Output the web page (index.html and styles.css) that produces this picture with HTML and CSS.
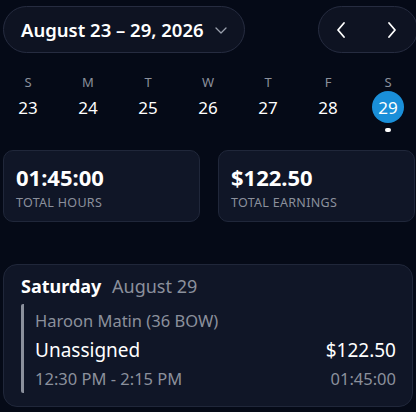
FILE: index.html
```html
<!DOCTYPE html>
<html lang="en">
<head>
  <meta charset="UTF-8">
  <meta name="viewport" content="width=device-width, initial-scale=1.0">
  <title>Timesheet</title>
  <link rel="stylesheet" href="styles.css">
</head>
<body>
  <div class="topbar">
    <button class="range">
      <span>August 23 – 29, 2026</span>
      <svg width="14" height="14" viewBox="0 0 14 14"><path d="M2 5l5 5 5-5" fill="none" stroke="#9aa0ad" stroke-width="1.3" stroke-linecap="round" stroke-linejoin="round"/></svg>
    </button>
    <div class="nav">
      <button class="nav-btn" aria-label="Previous week">
        <svg width="12" height="18" viewBox="0 0 12 18"><path d="M9 2L3 9l6 7" fill="none" stroke="#fff" stroke-width="1.8" stroke-linecap="round" stroke-linejoin="round"/></svg>
      </button>
      <button class="nav-btn" aria-label="Next week">
        <svg width="12" height="18" viewBox="0 0 12 18"><path d="M3 2l6 7-6 7" fill="none" stroke="#fff" stroke-width="1.8" stroke-linecap="round" stroke-linejoin="round"/></svg>
      </button>
    </div>
  </div>

  <div class="week">
    <div class="day"><span class="dow">S</span><span class="num">23</span></div>
    <div class="day"><span class="dow">M</span><span class="num">24</span></div>
    <div class="day"><span class="dow">T</span><span class="num">25</span></div>
    <div class="day"><span class="dow">W</span><span class="num">26</span></div>
    <div class="day"><span class="dow">T</span><span class="num">27</span></div>
    <div class="day"><span class="dow">F</span><span class="num">28</span></div>
    <div class="day selected"><span class="dow">S</span><span class="num">29</span><span class="dot"></span></div>
  </div>

  <div class="stats">
    <div class="stat">
      <div class="stat-value">01:45:00</div>
      <div class="stat-label">TOTAL HOURS</div>
    </div>
    <div class="stat">
      <div class="stat-value">$122.50</div>
      <div class="stat-label">TOTAL EARNINGS</div>
    </div>
  </div>

  <div class="daycard">
    <div class="daycard-head"><strong>Saturday</strong> <span>August 29</span></div>
    <div class="shift">
      <div class="shift-who">Haroon Matin (36 BOW)</div>
      <div class="shift-row">
        <span class="shift-title">Unassigned</span>
        <span class="shift-pay">$122.50</span>
      </div>
      <div class="shift-row sub">
        <span>12:30 PM - 2:15 PM</span>
        <span>01:45:00</span>
      </div>
    </div>
  </div>
</body>
</html>
```

FILE: styles.css
```css
*, *::before, *::after { box-sizing: border-box; }
html, body {
  margin: 0;
  padding: 0;
  height: 100%;
  font-family: 'Noto Sans', sans-serif;
  background: #050a17;
  color: #fff;
  overflow: hidden;
}
button {
  font-family: inherit;
  color: inherit;
  cursor: pointer;
}
.topbar {
  display: flex;
  justify-content: space-between;
  padding: 6px 0 0 3px;
}
.range {
  display: flex;
  align-items: center;
  gap: 10px;
  height: 47px;
  width: 242px;
  padding: 0 0 0 17px;
  background: #0e1322;
  border: 1px solid #262c40;
  border-radius: 24px;
  font-size: 18.5px;
  font-weight: 600;
  white-space: nowrap;
}
.range svg { margin-top: 1px; }
.nav {
  display: flex;
  align-items: center;
  justify-content: space-between;
  width: 100px;
  height: 47px;
  margin-right: -2px;
  padding: 0 19px 0 16px;
  background: #0e1322;
  border: 1px solid #262c40;
  border-radius: 24px;
}
.nav-btn {
  background: none;
  border: none;
  padding: 0;
  display: flex;
}
.week {
  display: grid;
  grid-template-columns: repeat(7, 56px);
  gap: 4px;
  margin-top: 21px;
}
.day {
  display: flex;
  flex-direction: column;
  align-items: center;
}
.dow {
  font-size: 13px;
  line-height: 16px;
  color: #8b909c;
}
.num {
  margin-top: 1px;
  width: 32px;
  height: 32px;
  border-radius: 50%;
  display: flex;
  align-items: center;
  justify-content: center;
  font-size: 17px;
}
.selected .num { background: #1a8fd9; }
.dot {
  margin-top: 5px;
  width: 6px;
  height: 4px;
  border-radius: 2px;
  background: #fff;
}
.stats {
  display: grid;
  grid-template-columns: 197px 197px;
  gap: 18px;
  padding: 18px 0 0 3px;
}
.stat {
  height: 72px;
  padding: 12px 12px;
  background: #101627;
  border: 1px solid #20273a;
  border-radius: 10px;
}
.stat-value {
  font-size: 22px;
  font-weight: 700;
  line-height: 28px;
}
.stat-label {
  margin-top: 3px;
  font-size: 12.5px;
  letter-spacing: 0.3px;
  color: #8b909c;
}
.daycard {
  margin: 42px 3px 0 3px;
  height: 143px;
  padding: 9px 16px 0 17px;
  background: #101627;
  border: 1px solid #20273a;
  border-radius: 14px;
}
.daycard-head {
  font-size: 18px;
  line-height: 24px;
}
.daycard-head strong { font-weight: 700; }
.daycard-head span {
  margin-left: 6px;
  color: #8b909c;
}
.shift {
  margin-top: 6px;
  border-left: 3px solid #8b909c;
  border-radius: 2px;
  padding: 6px 0 3px 11px;
}
.shift-who {
  font-size: 16.5px;
  line-height: 22px;
  color: #8b909c;
}
.shift-row {
  display: flex;
  justify-content: space-between;
  align-items: baseline;
  margin-top: 6px;
  font-size: 19px;
  line-height: 24px;
}
.shift-row.sub {
  margin-top: 6px;
  font-size: 16.5px;
  line-height: 22px;
  color: #8b909c;
}
```
